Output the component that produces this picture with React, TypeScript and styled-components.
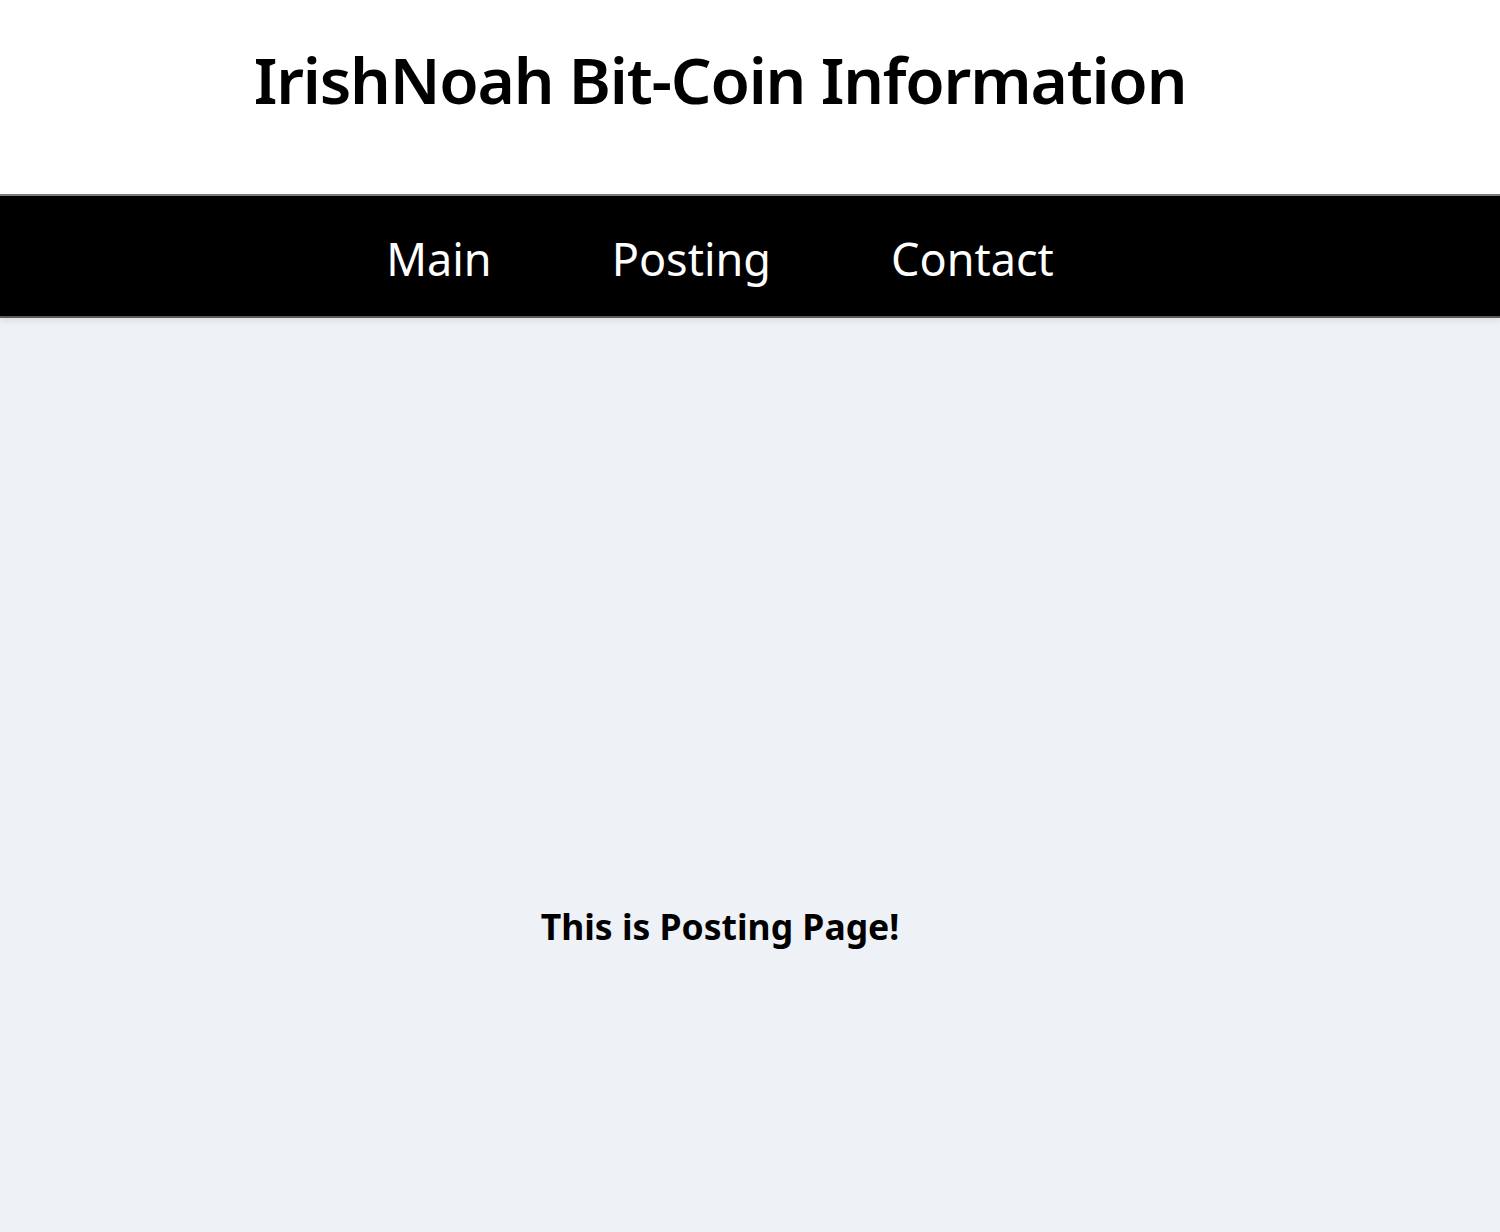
import React from 'react';
import styled, { createGlobalStyle } from 'styled-components';

const GlobalStyle = createGlobalStyle`
    html, body {
        margin: 0;
        padding: 0;
        background: #eef1f6;
        font-family: "Noto Sans", "Open Sans", sans-serif;
    }
    #root {
        min-height: 100vh;
        display: flex;
        flex-direction: column;
    }
`

const Header = styled.header`
    background: #fff;
    height: 194px;
    display: flex;
    justify-content: center;
    padding-right: 60px;
    box-sizing: border-box;
    h1 {
        margin: 0;
        padding-top: 36px;
        font-size: 64px;
        font-weight: 600;
        color: #000;
        letter-spacing: -1.2px;
    }
`

const NavBar = styled.nav`
    background: #000;
    height: 124px;
    border-top: 2px solid #7a7a7a;
    border-bottom: 2px solid #5a5a5a;
    box-sizing: border-box;
    box-shadow: 0 3px 6px rgba(0, 0, 0, 0.08);
    display: flex;
    justify-content: center;
    align-items: center;
    gap: 120px;
    padding-right: 60px;
    padding-top: 4px;
    position: relative;
    z-index: 1;
`

const NavLink = styled.a`
    color: #fff;
    font-size: 45px;
    text-decoration: none;
    cursor: pointer;
`

const Content = styled.main`
    flex: 1;
    display: flex;
    justify-content: center;
    padding-right: 60px;
    padding-top: 584px;
    h2 {
        margin: 0;
        font-size: 35.5px;
        font-weight: 700;
        color: #000;
    }
`

const App: React.FC = () => {
    return (
        <>
            <GlobalStyle />
            <Header>
                <h1>IrishNoah Bit-Coin Information</h1>
            </Header>
            <NavBar>
                <NavLink>Main</NavLink>
                <NavLink>Posting</NavLink>
                <NavLink>Contact</NavLink>
            </NavBar>
            <Content>
                <h2>This is Posting Page!</h2>
            </Content>
        </>
    )
}

export default App
